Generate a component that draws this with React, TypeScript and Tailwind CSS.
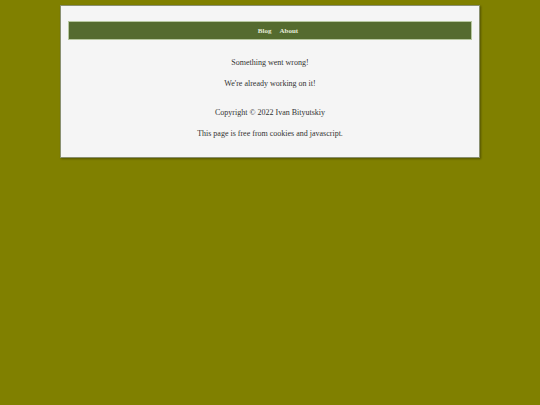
export default function App() {
  return (
    <div className="min-h-screen bg-[#808000] pt-[5px]" style={{ fontFamily: '"Liberation Serif", "Times New Roman", serif' }}>
      <div className="ml-[60px] w-[420px] border border-[#8a9070] bg-[#f5f5f5] px-[7px] pt-[15px] pb-[18px] shadow-[1px_1px_2px_rgba(0,0,0,0.35)]">
        <nav className="flex h-[19px] items-center justify-center gap-[8px] border border-[#b8c8a0] bg-[#556b2f] pt-[1px] pl-[16px] text-[7px] font-bold text-[#e4ead8]">
          <a>Blog</a>
          <a>About</a>
        </nav>
        <main className="pt-[18px] text-center text-[8px] leading-[10px] text-[#333]">
          <p>Something went wrong!</p>
          <p className="mt-[11px]">We're already working on it!</p>
        </main>
        <footer className="pt-[19px] text-center text-[8px] leading-[10px] text-[#333]">
          <p>Copyright © 2022 Ivan Bityutskiy</p>
          <p className="mt-[11px]">This page is free from cookies and javascript.</p>
        </footer>
      </div>
    </div>
  )
}
